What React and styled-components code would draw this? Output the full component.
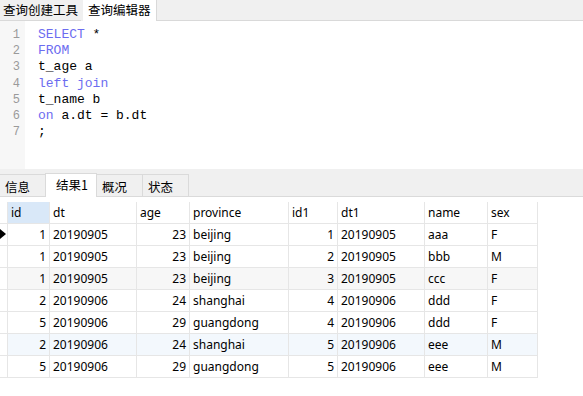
import React from 'react'
import styled, { createGlobalStyle, css } from 'styled-components'

const GlobalStyle = createGlobalStyle`
  html, body {
    margin: 0;
    padding: 0;
    background: #ffffff;
  }
  * { box-sizing: border-box; }
`;

const sqlLines = [
  [{ t: 'SELECT', k: true }, { t: ' *' }],
  [{ t: 'FROM', k: true }],
  [{ t: 't_age a' }],
  [{ t: 'left join', k: true }],
  [{ t: 't_name b' }],
  [{ t: 'on', k: true }, { t: ' a.dt = b.dt' }],
  [{ t: ';' }],
];

const columns = [
  { key: 'id', label: 'id', width: 42, num: true },
  { key: 'dt', label: 'dt', width: 87 },
  { key: 'age', label: 'age', width: 53, num: true },
  { key: 'province', label: 'province', width: 99 },
  { key: 'id1', label: 'id1', width: 49, num: true },
  { key: 'dt1', label: 'dt1', width: 87 },
  { key: 'name', label: 'name', width: 63 },
  { key: 'sex', label: 'sex', width: 50 },
];

const rows = [
  { id: 1, dt: '20190905', age: 23, province: 'beijing', id1: 1, dt1: '20190905', name: 'aaa', sex: 'F' },
  { id: 1, dt: '20190905', age: 23, province: 'beijing', id1: 2, dt1: '20190905', name: 'bbb', sex: 'M' },
  { id: 1, dt: '20190905', age: 23, province: 'beijing', id1: 3, dt1: '20190905', name: 'ccc', sex: 'F', tint: 'gray' },
  { id: 2, dt: '20190906', age: 24, province: 'shanghai', id1: 4, dt1: '20190906', name: 'ddd', sex: 'F' },
  { id: 5, dt: '20190906', age: 29, province: 'guangdong', id1: 4, dt1: '20190906', name: 'ddd', sex: 'F' },
  { id: 2, dt: '20190906', age: 24, province: 'shanghai', id1: 5, dt1: '20190906', name: 'eee', sex: 'M', tint: 'blue' },
  { id: 5, dt: '20190906', age: 29, province: 'guangdong', id1: 5, dt1: '20190906', name: 'eee', sex: 'M' },
];

const App = () => {
  return (
    <>
      <GlobalStyle />
      <Page>
        <TopTabs>
          <TopTab>查询创建工具</TopTab>
          <TopTab active>查询编辑器</TopTab>
          <TabFill />
        </TopTabs>

        <Editor>
          <Gutter>
            {sqlLines.map((_, i) => (
              <LineNo key={i}>{i + 1}</LineNo>
            ))}
          </Gutter>
          <Code>
            {sqlLines.map((line, i) => (
              <CodeLine key={i}>
                {line.map((part, j) => (
                  <Token key={j} keyword={part.k}>{part.t}</Token>
                ))}
              </CodeLine>
            ))}
          </Code>
        </Editor>

        <Splitter />

        <ResultTabs>
          <ResultTab>信息</ResultTab>
          <ResultTab active>结果1</ResultTab>
          <ResultTab>概况</ResultTab>
          <ResultTab>状态</ResultTab>
          <ResultFill />
        </ResultTabs>

        <Grid>
          <HeaderRow>
            <Indicator />
            {columns.map((c) => (
              <HeadCell key={c.key} width={c.width} selected={c.key === 'id'}>
                {c.label}
              </HeadCell>
            ))}
          </HeaderRow>
          {rows.map((r, i) => (
            <Row key={i} tint={r.tint}>
              <Indicator>{i === 0 && <Arrow />}</Indicator>
              {columns.map((c) => (
                <Cell key={c.key} width={c.width} num={c.num}>
                  {r[c.key]}
                </Cell>
              ))}
            </Row>
          ))}
        </Grid>
      </Page>
    </>
  );
};

export default App;

const Page = styled.div`
  width: 583px;
  height: 396px;
  display: flex;
  flex-direction: column;
  overflow: hidden;
  background: #ffffff;
`;

const TopTabs = styled.div`
  display: flex;
  height: 21px;
  background: #f0f0f0;
`;

const TopTab = styled.div`
  height: 21px;
  padding: 0 3px 0 3px;
  margin-right: 2px;
  font-family: "Noto Sans CJK SC", sans-serif;
  font-size: 12.5px;
  line-height: 19px;
  color: #000;
  background: #f0f0f0;
  border-bottom: 1px solid #d9d9d9;

  ${props => props.active && css`
    background: #ffffff;
    padding: 0 5px;
    margin-right: 0;
    border-bottom: none;
  `}
`;

const TabFill = styled.div`
  flex: 1;
  border-left: 1px solid #d9d9d9;
  border-bottom: 1px solid #d9d9d9;
`;

const Editor = styled.div`
  display: flex;
  height: 148px;
`;

const Gutter = styled.div`
  width: 25px;
  padding-top: 6px;
  background: #f7f7f7;
  text-align: right;
  padding-right: 5px;
`;

const LineNo = styled.div`
  font-family: "Liberation Mono", monospace;
  font-size: 12px;
  line-height: 16.2px;
  color: #9a9a9a;
`;

const Code = styled.div`
  flex: 1;
  padding-top: 6px;
  padding-left: 13px;
`;

const CodeLine = styled.div`
  font-family: "Liberation Mono", monospace;
  font-size: 13px;
  line-height: 16.2px;
  height: 16.2px;
  white-space: pre;
  color: #000;
`;

const Token = styled.span`
  color: ${props => (props.keyword ? '#6c6cf0' : '#000000')};
`;

const Splitter = styled.div`
  height: 4px;
  background: #f0f0f0;
`;

const ResultTabs = styled.div`
  display: flex;
  height: 24px;
  background: #f0f0f0;
  align-items: flex-end;
`;

const ResultTab = styled.div`
  width: 46px;
  height: 23px;
  padding-left: 5px;
  font-family: "Noto Sans CJK SC", sans-serif;
  font-size: 12.5px;
  line-height: 24px;
  color: #000;
  background: #f0f0f0;
  border-top: 1px solid #dadada;
  border-right: 1px solid #dadada;
  border-bottom: 1px solid #dadada;

  ${props => props.active && css`
    width: 52px;
    height: 24px;
    padding-left: 10px;
    line-height: 22px;
    background: #ffffff;
    border-left: 1px solid #dadada;
    border-bottom: none;
    margin-left: -1px;
  `}
`;

const ResultFill = styled.div`
  flex: 1;
  height: 1px;
  background: #dadada;
`;

const Grid = styled.div`
  margin-top: 5px;
  display: flex;
  flex-direction: column;
  width: 538px;
  font-family: "Noto Sans", "Open Sans", sans-serif;
  font-size: 12px;
  color: #000;
`;

const HeaderRow = styled.div`
  display: flex;
  height: 22px;
  border-bottom: 1px solid #e6e6e6;
`;

const Row = styled.div`
  display: flex;
  height: 22px;
  border-bottom: 1px solid #e6e6e6;
  background: ${props =>
    props.tint === 'gray' ? '#f7f7f7' : props.tint === 'blue' ? '#f3f8fd' : '#ffffff'};
`;

const Indicator = styled.div`
  width: 8px;
  flex-shrink: 0;
  border-right: 1px solid #e6e6e6;
  position: relative;
  background: #ffffff;
`;

const Arrow = styled.div`
  position: absolute;
  left: 0;
  top: 5px;
  width: 0;
  height: 0;
  border-top: 5px solid transparent;
  border-bottom: 5px solid transparent;
  border-left: 6px solid #000;
`;

const HeadCell = styled.div`
  width: ${props => props.width}px;
  flex-shrink: 0;
  padding-left: 3px;
  line-height: 21px;
  border-right: 1px solid #e6e6e6;
  background: ${props => (props.selected ? '#d9e8f8' : 'transparent')};
`;

const Cell = styled.div`
  width: ${props => props.width}px;
  flex-shrink: 0;
  padding: 0 3px;
  line-height: 21px;
  border-right: 1px solid #e6e6e6;
  text-align: ${props => (props.num ? 'right' : 'left')};
  white-space: nowrap;
`;
